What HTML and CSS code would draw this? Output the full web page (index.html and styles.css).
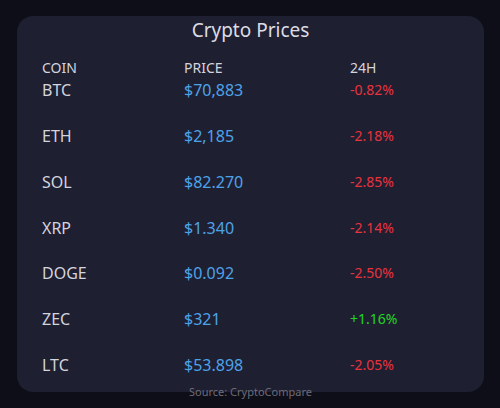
FILE: index.html
```html
<!DOCTYPE html>
<html lang="en">
<head>
    <meta charset="UTF-8">
    <meta name="viewport" content="width=device-width, initial-scale=1.0">
    <title>Crypto Prices</title>
    <link rel="stylesheet" href="styles.css">
</head>
<body>
    <div class="card">
        <h1>Crypto Prices</h1>
        <div class="table">
            <div class="head">COIN</div>
            <div class="head">PRICE</div>
            <div class="head">24H</div>

            <div class="coin">BTC</div><div class="price">$70,883</div><div class="change down">-0.82%</div>
            <div class="coin">ETH</div><div class="price">$2,185</div><div class="change down">-2.18%</div>
            <div class="coin">SOL</div><div class="price">$82.270</div><div class="change down">-2.85%</div>
            <div class="coin">XRP</div><div class="price">$1.340</div><div class="change down">-2.14%</div>
            <div class="coin">DOGE</div><div class="price">$0.092</div><div class="change down">-2.50%</div>
            <div class="coin">ZEC</div><div class="price">$321</div><div class="change up">+1.16%</div>
            <div class="coin">LTC</div><div class="price">$53.898</div><div class="change down">-2.05%</div>
        </div>
    </div>
    <div class="source">Source: CryptoCompare</div>
</body>
</html>
```

FILE: styles.css
```css
* {
    box-sizing: border-box;
    margin: 0;
    padding: 0;
}

body {
    font-family: 'Noto Sans', 'Open Sans', sans-serif;
    background-color: #0e0e18;
    color: #d4d4dc;
    padding: 16px 16px 0 17px;
    height: 408px;
    overflow: hidden;
}

.card {
    background-color: #1f1f32;
    border-radius: 16px;
    height: 376px;
    padding: 1px 25px 0 25px;
}

h1 {
    font-size: 19px;
    font-weight: normal;
    line-height: 26px;
    text-align: center;
    color: #dcdce4;
}

.table {
    display: grid;
    grid-template-columns: 142px 166px 1fr;
    margin-top: 13px;
}

.head {
    font-size: 14px;
    line-height: 23px;
    color: #d4d4dc;
}

.coin, .price, .change {
    font-size: 16px;
    line-height: 22px;
    height: 45.85px;
}

.coin {
    color: #d4d4dc;
}

.price {
    color: #4da3e8;
}

.change.down {
    font-size: 14px;
    color: #e8333d;
}

.change.up {
    font-size: 14px;
    color: #1fd81f;
}

.source {
    margin-top: -8px;
    text-align: center;
    font-size: 11px;
    color: #6c6c78;
}
```
